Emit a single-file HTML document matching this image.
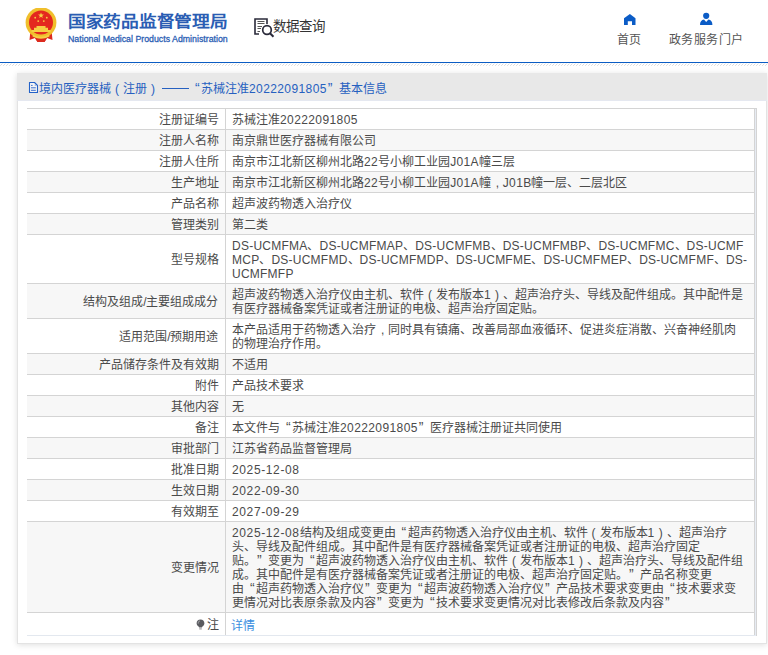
<!DOCTYPE html>
<html lang="zh-CN"><head><meta charset="utf-8">
<style>
*{margin:0;padding:0;box-sizing:border-box}
html,body{width:768px;height:655px;overflow:hidden;background:#fff}
body{font-family:"Liberation Sans",sans-serif;color:#333;position:relative;text-spacing-trim:space-all}
b,i{font-weight:normal;font-style:normal}
.hdr{position:absolute;left:0;top:0;width:768px;height:62px;background:#fff}
.emb{position:absolute;left:25px;top:8px;width:32px;height:35px}
.t1{position:absolute;left:68px;top:10px;font-size:18px;font-weight:bold;color:#2a5db3;white-space:nowrap;line-height:22px;transform-origin:0 0;transform:translateY(2px) scale(.985,.88)}
.t2{position:absolute;left:68px;top:33px;font-size:9.5px;color:#2a5db3;white-space:nowrap;line-height:11px;transform-origin:0 0;transform:scaleX(.925);-webkit-text-stroke:.3px #2a5db3}
.sq{position:absolute;left:253px;top:17px;width:22px;height:21px}
.sqt{position:absolute;left:273px;top:18px;font-size:13.5px;color:#333;line-height:18px;white-space:nowrap}
.nav{position:absolute;top:33px;font-size:12px;color:#555;line-height:14px;white-space:nowrap;letter-spacing:.4px}
.ico{position:absolute}
.bl{position:absolute;left:0;top:62px;width:768px;height:1px;background:#0b5dc4}
.hatch{position:absolute;left:0;top:63px;display:block}
.panel{position:absolute;left:17px;top:73px;width:750px;height:571px;background:#fff;border:1px solid #e3e3e3;border-top:0;box-shadow:0 1px 6px rgba(0,0,0,.13)}
.ph{position:absolute;left:-1px;top:0;width:750px;height:28px;background:#e8e8e8;border-bottom:1px solid #e5e8f0;color:#2660c0;font-size:12px;line-height:28px;white-space:nowrap;padding-left:11px;padding-top:2px}
.ph .doc{position:absolute;left:11px;top:9px}
.sp{display:inline-block;width:11px}
.pc{display:inline-block;width:12px;text-align:center}
.pm{display:inline-block;width:12px;padding-left:5px}
.dash{display:inline-block;width:30px;height:12px;vertical-align:-1px;position:relative}
.dash:after{content:"";position:absolute;left:3px;right:0;top:6px;height:1px;background:#2660c0}
.ql{display:inline-block;width:12px;padding-left:6px;font-size:14px;line-height:10px}
.qr{display:inline-block;width:12px;padding-left:1px;font-size:14px;line-height:10px}
.dg{letter-spacing:.4px}
.dt{letter-spacing:.62px}
.lt{letter-spacing:.24px}
table{position:absolute;left:9px;top:35px;width:728px;border-collapse:collapse;table-layout:fixed;font-size:12px;color:#4a4a4a}
td{border-top:1px solid #d4d4d4;border-bottom:1px solid #d4d4d4;line-height:14px;white-space:nowrap;vertical-align:middle}
td.l{width:198px;text-align:right;padding:4px 6px 2px 0;border-right:1px solid #d4d4d4}
td.v{padding:4px 0 2px 6.5px;border-right:1px solid #d4d4d4}
tr:nth-child(even) td{background:#f7f7f7}
tr.last td{height:23px;border-bottom-color:#e3e8ef}
.bulb{display:inline-block;vertical-align:-1px;margin-right:2px}
/*r*/.rb{position:absolute;left:737px;top:35px;width:2px;height:528px;border-top:1px solid #d4d4d4;border-right:1px solid #d4d4d4;background:#e6ebf3}
a{color:#3b8ee0;text-decoration:none;font-size:12px;position:relative;top:1px;left:-1px}
</style></head><body>
<div class="hdr">
  <svg class="emb" viewBox="0 0 32 35">
    <path d="M5.5 22 L4.5 32 L10 30 L12.5 34 H19.5 L22 30 L27.5 32 L26.5 22 Z" fill="#dc2a1e"/>
    <circle cx="16" cy="14.6" r="15.4" fill="#f0bf2c"/>
    <circle cx="16" cy="14.4" r="12" fill="#e4281f"/>
    <path d="M11.5 18 H20.5 V19.8 H11.5Z M9 19.8 H23 V22 H9Z M6.5 22 H25.5 V24 H6.5Z" fill="#f6cf45"/>
    <path d="M16 4.6 L16.8 6.6 L18.9 6.6 L17.2 7.9 L17.8 10 L16 8.8 L14.2 10 L14.8 7.9 L13.1 6.6 L15.2 6.6Z" fill="#f6cf45"/>
    <circle cx="10.2" cy="9.7" r=".9" fill="#f6cf45"/><circle cx="21.8" cy="9.7" r=".9" fill="#f6cf45"/>
    <circle cx="13.2" cy="13.1" r=".9" fill="#f6cf45"/><circle cx="18.8" cy="13.1" r=".9" fill="#f6cf45"/>
    <path d="M8 26.5 Q16 31 24 26.5 L24.5 28.5 Q16 33 7.5 28.5Z" fill="#f6cf45"/>
    <path d="M10 30 L12.5 34 H19.5 L22 30 Q16 32.5 10 30Z" fill="#dc2a1e"/>
  </svg>
  <div class="t1">国家药品监督管理局</div>
  <div class="t2" id="t2">National Medical Products Administration</div>
  <svg class="sq" viewBox="0 0 22 21">
    <path d="M6 17 H2 V2 H14 V7" fill="none" stroke="#2a2a3a" stroke-width="1.6"/>
    <path d="M4.5 4.5H11.5M4.5 6.5H11.5M4.5 9.5H9M4.5 11.5H8M4.5 14.5H7" stroke="#555" stroke-width="1"/>
    <circle cx="14" cy="13" r="4.3" fill="none" stroke="#2a2a3a" stroke-width="1.7"/>
    <path d="M17 16.2 L20.5 19.8" stroke="#2a2a3a" stroke-width="2"/>
  </svg>
  <div class="sqt">数据查询</div>
  <svg class="ico" style="left:623.5px;top:14px" width="12" height="11" viewBox="0 0 12 11">
    <path d="M5.9 0 L11.5 4.3 V11 H8 V7.2 H3.8 V11 H0 V4.3Z" fill="#0b5cc6"/>
  </svg>
  <div class="nav" style="left:617px">首页</div>
  <svg class="ico" style="left:700px;top:12px" width="13" height="13" viewBox="0 0 13 13">
    <circle cx="6.2" cy="3.8" r="3.1" fill="#0b5cc6"/>
    <path d="M0 13 Q0 8 4 7.5 L6.2 10 L8.4 7.5 Q12.4 8 12.4 13Z" fill="#0b5cc6"/>
  </svg>
  <div class="nav" style="left:669px">政务服务门户</div>
</div>
<div class="bl"></div>
<svg class="hatch" width="768" height="3"><defs><pattern id="hp" width="3" height="3" patternUnits="userSpaceOnUse"><rect x="1" y="1" width="1" height="1" fill="#dcdcdc"/><rect x="0" y="2" width="1" height="1" fill="#e2e2e2"/><rect x="2" y="0" width="1" height="1" fill="#f0f0f0"/></pattern></defs><rect width="768" height="3" fill="url(#hp)"/></svg>
<div class="panel">
  <div class="ph"><svg class="doc" width="11" height="12" viewBox="0 0 11 12"><path d="M1.5 .5H6.5L9.5 3.5V10.5H1.5Z" fill="#f4f4f4" stroke="#2462c8" stroke-width="1.1" stroke-linejoin="round"/><path d="M3 3.4H4.6M6.8 3.2H7.6M3 5.8H7.8M3 8.3H7.8" stroke="#3a6fd0" stroke-width="1"/></svg><b class="sp"></b>境内医疗器械<b class="pc">(</b>注册<b class="pc">)</b><b class="dash"></b><b class="ql">“</b>苏械注准<i class="dg">20222091805</i><b class="qr">”</b>基本信息</div>
  <table>
<tr><td class="l">注册证编号</td><td class="v">苏械注准<i class="dg">20222091805</i></td></tr>
<tr><td class="l">注册人名称</td><td class="v">南京鼎世医疗器械有限公司</td></tr>
<tr><td class="l">注册人住所</td><td class="v">南京市江北新区柳州北路<i class="dg">22</i>号小柳工业园<i class="lt">J</i><i class="dg">01</i><i class="lt">A</i>幢三层</td></tr>
<tr><td class="l">生产地址</td><td class="v">南京市江北新区柳州北路<i class="dg">22</i>号小柳工业园<i class="lt">J</i><i class="dg">01</i><i class="lt">A</i>幢<b class="pm">,</b><i class="lt">J</i><i class="dg">01</i><i class="lt">B</i>幢一层、二层北区</td></tr>
<tr><td class="l">产品名称</td><td class="v">超声波药物透入治疗仪</td></tr>
<tr><td class="l">管理类别</td><td class="v">第二类</td></tr>
<tr><td class="l">型号规格</td><td class="v"><i class="lt">DS-UCMFMA</i>、<i class="lt">DS-UCMFMAP</i>、<i class="lt">DS-UCMFMB</i>、<i class="lt">DS-UCMFMBP</i>、<i class="lt">DS-UCMFMC</i>、<i class="lt">DS-UCMF</i><br><i class="lt">MCP</i>、<i class="lt">DS-UCMFMD</i>、<i class="lt">DS-UCMFMDP</i>、<i class="lt">DS-UCMFME</i>、<i class="lt">DS-UCMFMEP</i>、<i class="lt">DS-UCMFMF</i>、<i class="lt">DS-</i><br><i class="lt">UCMFMFP</i></td></tr>
<tr><td class="l">结构及组成/主要组成成分</td><td class="v">超声波药物透入治疗仪由主机、软件<b class="pc">(</b>发布版本<i class="dg">1</i><b class="pc">)</b>、超声治疗头、导线及配件组成。其中配件是<br>有医疗器械备案凭证或者注册证的电极、超声治疗固定贴。</td></tr>
<tr><td class="l">适用范围/预期用途</td><td class="v">本产品适用于药物透入治疗<b class="pm">,</b>同时具有镇痛、改善局部血液循环、促进炎症消散、兴奋神经肌肉<br>的物理治疗作用。</td></tr>
<tr><td class="l">产品储存条件及有效期</td><td class="v">不适用</td></tr>
<tr><td class="l">附件</td><td class="v">产品技术要求</td></tr>
<tr><td class="l">其他内容</td><td class="v">无</td></tr>
<tr><td class="l">备注</td><td class="v">本文件与<b class="ql">“</b>苏械注准<i class="dg">20222091805</i><b class="qr">”</b>医疗器械注册证共同使用</td></tr>
<tr><td class="l">审批部门</td><td class="v">江苏省药品监督管理局</td></tr>
<tr><td class="l">批准日期</td><td class="v"><i class="dt">2025-12-08</i></td></tr>
<tr><td class="l">生效日期</td><td class="v"><i class="dt">2022-09-30</i></td></tr>
<tr><td class="l">有效期至</td><td class="v"><i class="dt">2027-09-29</i></td></tr>
<tr><td class="l">变更情况</td><td class="v"><i class="dt">2025-12-08</i>结构及组成变更由<b class="ql">“</b>超声药物透入治疗仪由主机、软件<b class="pc">(</b>发布版本<i class="dg">1</i><b class="pc">)</b>、超声治疗<br>头、导线及配件组成。其中配件是有医疗器械备案凭证或者注册证的电极、超声治疗固定<br>贴。<b class="qr">”</b>变更为<b class="ql">“</b>超声波药物透入治疗仪由主机、软件<b class="pc">(</b>发布版本<i class="dg">1</i><b class="pc">)</b>、超声治疗头、导线及配件组<br>成。其中配件是有医疗器械备案凭证或者注册证的电极、超声治疗固定贴。<b class="qr">”</b>产品名称变更<br>由<b class="ql">“</b>超声药物透入治疗仪<b class="qr">”</b>变更为<b class="ql">“</b>超声波药物透入治疗仪<b class="qr">”</b>产品技术要求变更由<b class="ql">“</b>技术要求变<br>更情况对比表原条款及内容<b class="qr">”</b>变更为<b class="ql">“</b>技术要求变更情况对比表修改后条款及内容<b class="qr">”</b></td></tr>
<tr class="last"><td class="l"><svg class="bulb" width="9" height="11" viewBox="0 0 9 11"><path d="M4.5 0.4C2.2 0.4 0.6 2.1 0.6 4.2C0.6 5.8 1.6 6.8 2.6 7.6L3.1 8.6H5.9L6.4 7.6C7.4 6.8 8.4 5.8 8.4 4.2C8.4 2.1 6.8 0.4 4.5 0.4Z" fill="#5a5b60"/><path d="M2.2 4.6C2.1 3.1 2.9 2.1 4 1.8" stroke="#c8c8cc" stroke-width=".7" fill="none"/><rect x="3.2" y="9.4" width="2.6" height="1" fill="#8a8a90"/></svg>注</td><td class="v"><a>详情</a></td></tr>
  </table>
  <div class="rb"></div>
</div>
</body></html>
